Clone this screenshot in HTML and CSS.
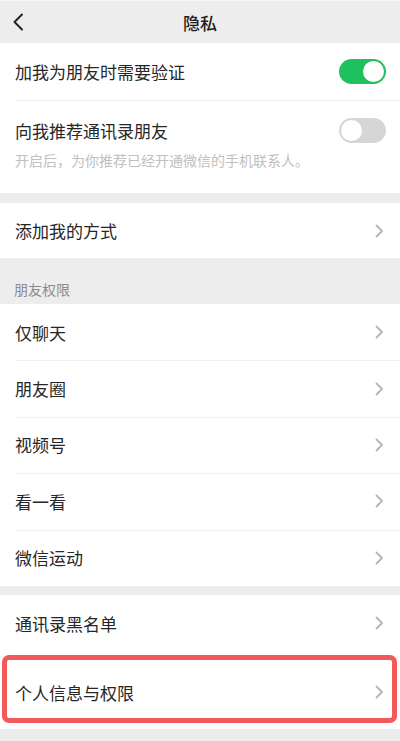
FILE: index.html
```html
<!DOCTYPE html>
<html lang="zh">
<head>
<meta charset="utf-8">
<link rel="stylesheet" href="styles.css">
</head>
<body>
<div class="screen">
  <header class="nav">
    <svg class="back" width="12" height="18" viewBox="0 0 12 18"><path d="M10 1.5 L2.5 9 L10 16.5" fill="none" stroke="#222" stroke-width="2" stroke-linecap="round" stroke-linejoin="round"/></svg>
    <div class="nav-title">隐私</div>
  </header>

  <div class="group">
    <div class="cell"><span class="label">加我为朋友时需要验证</span><span class="switch on"><span class="knob"></span></span></div>
    <div class="cell cell-desc divided">
      <div class="cell-row"><span class="label">向我推荐通讯录朋友</span><span class="switch off"><span class="knob"></span></span></div>
      <div class="desc">开启后，为你推荐已经开通微信的手机联系人。</div>
    </div>
  </div>

  <div class="group gap">
    <div class="cell short"><span class="label">添加我的方式</span><svg class="arrow" width="9" height="14" viewBox="0 0 9 14"><path d="M1.5 1.5 L7 7 L1.5 12.5" fill="none" stroke="#b5b5b5" stroke-width="1.8" stroke-linecap="round" stroke-linejoin="round"/></svg></div>
  </div>

  <div class="section-title">朋友权限</div>
  <div class="group">
    <div class="cell list"><span class="label">仅聊天</span><svg class="arrow" width="9" height="14" viewBox="0 0 9 14"><path d="M1.5 1.5 L7 7 L1.5 12.5" fill="none" stroke="#b5b5b5" stroke-width="1.8" stroke-linecap="round" stroke-linejoin="round"/></svg></div>
    <div class="cell list divided"><span class="label">朋友圈</span><svg class="arrow" width="9" height="14" viewBox="0 0 9 14"><path d="M1.5 1.5 L7 7 L1.5 12.5" fill="none" stroke="#b5b5b5" stroke-width="1.8" stroke-linecap="round" stroke-linejoin="round"/></svg></div>
    <div class="cell list divided"><span class="label">视频号</span><svg class="arrow" width="9" height="14" viewBox="0 0 9 14"><path d="M1.5 1.5 L7 7 L1.5 12.5" fill="none" stroke="#b5b5b5" stroke-width="1.8" stroke-linecap="round" stroke-linejoin="round"/></svg></div>
    <div class="cell list divided"><span class="label">看一看</span><svg class="arrow" width="9" height="14" viewBox="0 0 9 14"><path d="M1.5 1.5 L7 7 L1.5 12.5" fill="none" stroke="#b5b5b5" stroke-width="1.8" stroke-linecap="round" stroke-linejoin="round"/></svg></div>
    <div class="cell list divided"><span class="label">微信运动</span><svg class="arrow" width="9" height="14" viewBox="0 0 9 14"><path d="M1.5 1.5 L7 7 L1.5 12.5" fill="none" stroke="#b5b5b5" stroke-width="1.8" stroke-linecap="round" stroke-linejoin="round"/></svg></div>
  </div>

  <div class="group gap-small">
    <div class="cell"><span class="label">通讯录黑名单</span><svg class="arrow" width="9" height="14" viewBox="0 0 9 14"><path d="M1.5 1.5 L7 7 L1.5 12.5" fill="none" stroke="#b5b5b5" stroke-width="1.8" stroke-linecap="round" stroke-linejoin="round"/></svg></div>
    <div class="cell tall highlighted"><span class="label">个人信息与权限</span><svg class="arrow" width="9" height="14" viewBox="0 0 9 14"><path d="M1.5 1.5 L7 7 L1.5 12.5" fill="none" stroke="#b5b5b5" stroke-width="1.8" stroke-linecap="round" stroke-linejoin="round"/></svg><span class="mark"></span></div>
  </div>
</div>
</body>
</html>
```
FILE: styles.css
```css
* { box-sizing: border-box; }
html, body { margin: 0; padding: 0; }
body {
  background: #ededed;
  font-family: "Noto Sans CJK SC", "Noto Sans", sans-serif;
  color: #222;
}
.screen {
  width: 400px;
  height: 741px;
  overflow: hidden;
  background: #ededed;
  border-top: 1px solid #f7f7f7;
}
.nav {
  position: relative;
  height: 42px;
  display: flex;
  align-items: center;
  justify-content: center;
}
.back {
  position: absolute;
  left: 12px;
  top: 12px;
}
.nav-title {
  font-size: 17px;
  font-weight: 500;
  color: #1e1e1e;
}
.group { background: #fff; }
.gap { margin-top: 10px; }
.gap-small { margin-top: 9px; }
.cell {
  position: relative;
  height: 57px;
  padding: 0 16px 0 15px;
  display: flex;
  align-items: center;
  justify-content: space-between;
}
.cell.short { height: 55px; }
.cell.list { height: 56.4px; }
.cell.tall { height: 77px; padding-top: 4px; }
.divided::before {
  content: "";
  position: absolute;
  left: 16px;
  right: 0;
  top: 0;
  border-top: 1px solid #f0f0f0;
}
.label {
  font-size: 17px;
  color: #262626;
}
.cell-desc {
  height: 93px;
  flex-direction: column;
  align-items: stretch;
  justify-content: flex-start;
  padding-top: 17px;
}
.cell-row {
  display: flex;
  align-items: center;
  justify-content: space-between;
  height: 26px;
}
.desc {
  margin-top: 7px;
  font-size: 14px;
  color: #c0c0c0;
}
.switch {
  position: relative;
  width: 47px;
  height: 25px;
  border-radius: 13px;
  margin-right: -2px;
}
.switch.on { background: #1fc15e; }
.switch.off { background: #d6d6d6; }
.knob {
  position: absolute;
  top: 2px;
  width: 21px;
  height: 21px;
  border-radius: 50%;
  background: #fff;
}
.on .knob { right: 2px; }
.off .knob { left: 2px; }
.arrow { flex: none; }
.section-title {
  height: 46px;
  padding: 21px 0 0 14px;
  font-size: 14px;
  line-height: 20px;
  color: #8c8c8c;
}
.mark {
  position: absolute;
  left: 2px;
  right: 3px;
  top: 3px;
  bottom: 6px;
  border: 5px solid #f25a5a;
  border-radius: 7px;
}
```
